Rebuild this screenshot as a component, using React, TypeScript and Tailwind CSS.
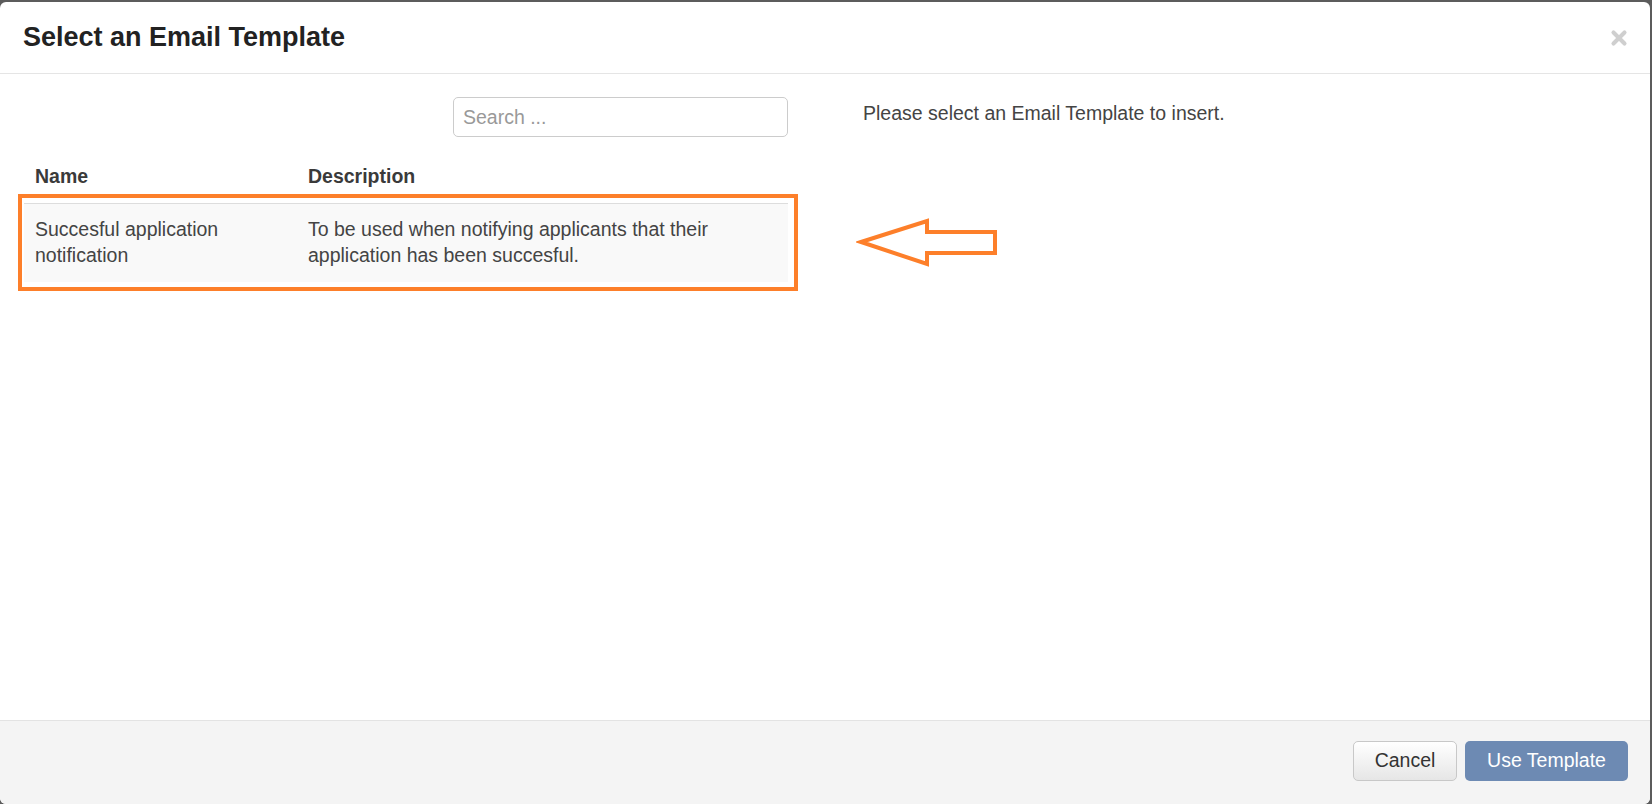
import { X } from 'lucide-react';

const font = { fontFamily: '"Liberation Sans", Arial, sans-serif' };

function Arrow() {
  return (
    <svg className="absolute left-[856px] top-[213px]" width="145" height="56" viewBox="0 0 145 56">
      <path
        d="M5 27 L71 6 L71 17 L139 17 L139 38 L71 38 L71 49 Z"
        fill="none"
        stroke="#fd7f2a"
        strokeWidth="4"
        strokeLinejoin="miter"
      />
    </svg>
  );
}

export default function App() {
  return (
    <div className="h-[804px] w-full bg-[#5c5c5c] pt-[2px] pr-[2px] overflow-hidden" style={font}>
      <div className="relative flex h-[802px] flex-col rounded-[6px] bg-white">
        {/* header */}
        <div className="flex h-[72px] shrink-0 items-center justify-between border-b border-[#e5e5e5] pl-[23px] pr-[20px]">
          <h4 className="text-[27px] font-bold text-[#222]">Select an Email Template</h4>
          <X size={22} strokeWidth={4.5} className="text-[#cfcfcf]" />
        </div>

        {/* body */}
        <div className="flex flex-1 pl-[24px] pt-[23px]">
          <div className="w-[764px]">
            <div className="flex justify-end">
              <input
                placeholder="Search ..."
                className="h-[40px] w-[335px] rounded-[5px] border border-[#ccc] px-[9px] text-[19.5px] text-[#555] placeholder:text-[#999] outline-none"
              />
            </div>
            <div className="mt-[14px] text-[19.5px] text-[#444]">
              <div className="flex h-[52px] items-center font-bold text-[#3a3a3a]">
                <div className="w-[273px] px-[11px]">Name</div>
                <div className="flex-1 px-[11px]">Description</div>
              </div>
              <div className="flex border-t border-[#ddd] bg-[#f9f9f9] pt-[12px] pb-[14px] leading-[26px]">
                <div className="w-[273px] px-[11px]">Succesful application notification</div>
                <div className="flex-1 px-[11px]">To be used when notifying applicants that their application has been succesful.</div>
              </div>
            </div>
          </div>
          <div className="ml-[75px] pt-[3px] text-[19.5px] leading-[27px] text-[#444]">
            Please select an Email Template to insert.
          </div>
        </div>

        {/* annotation */}
        <div className="absolute left-[18px] top-[192px] h-[97px] w-[780px] border-[4px] border-[#fd7f2a]" />
        <Arrow />

        {/* footer */}
        <div className="flex h-[84px] shrink-0 items-start justify-end gap-[8px] rounded-b-[6px] border-t border-[#e3e3e3] bg-[#f4f4f4] pr-[22px] pt-[20px]">
          <button className="h-[40px] w-[104px] rounded-[5px] border border-[#c8c8c8] bg-gradient-to-b from-white to-[#e6e6e6] text-[19.5px] text-[#333]">
            Cancel
          </button>
          <button className="h-[40px] w-[163px] rounded-[5px] bg-[#6d8ab3] text-[19.5px] text-white">
            Use Template
          </button>
        </div>
      </div>
    </div>
  );
}
